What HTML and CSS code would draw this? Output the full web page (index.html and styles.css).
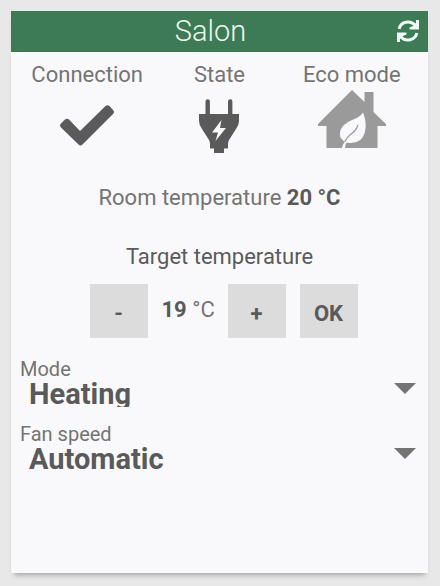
FILE: index.html
```html
<!DOCTYPE html>
<html lang="en">
<head>
<meta charset="utf-8">
<meta name="viewport" content="width=device-width, initial-scale=1">
<title>Salon</title>
<link rel="stylesheet" href="styles.css">
</head>
<body>
<main class="card">
  <header class="card-header">
    <h1 class="card-title">Salon</h1>
    <button class="refresh" type="button" aria-label="Refresh">
      <svg width="22" height="22" viewBox="0 0 22 22" fill="none" stroke="currentColor" stroke-width="3">
        <path d="M2.200 9A9 8.300 0 0 1 18 5M19.800 13A9 8.300 0 0 1 4 17"/>
        <path d="M22 0v9.500h-9.500V7.500L16 6l3-3V0zM0 22V12.500h9.500v2L6 16l-3 3v3z" fill="currentColor" stroke="none"/>
      </svg>
    </button>
  </header>

  <section class="statuses">
    <div class="status">
      <span>Connection</span>
      <svg class="status-icon" width="54" height="58" viewBox="0 0 54 58" fill="currentColor">
        <path d="M1 33.500 5 29.500Q7 28 9 29.500L20 41 45.500 16Q47.500 14.500 49.500 16L53 20Q55 22 53 24L22.500 54.500Q20.500 56.500 18.500 54.500L1 37.500Q-1 35.500 1 33.500Z"/>
      </svg>
    </div>
    <div class="status">
      <span>State</span>
      <svg class="status-icon" width="42" height="64" viewBox="0 0 42 64" fill="currentColor">
        <path fill-rule="evenodd" d="M7.500 24V11.500a2.200 2.200 0 0 1 4.400 0V24H30V11.500a2.200 2.200 0 0 1 4.400 0V24H41v7q0 4-3 8l-7 11q-1 2-1 4v4.500h-4v4.500H16v-4.500h-4V54q0-2-1-4L4 39q-3-4-3-8v-7ZM23.500 30 14 42.500h6L17.500 51 28 38h-6Z"/>
      </svg>
    </div>
    <div class="status">
      <span>Eco mode</span>
      <svg class="status-icon" width="68" height="58" viewBox="0 0 68 58">
        <path fill="#9a9a9a" d="M34 0 46.500 12V2H55.500V22L68 34V36H59.500V58H8.500V36H0V34Z"/>
        <path fill="#f9f9fb" d="M24 58Q25 54 26.500 52Q20 47 22.500 40Q25 34 34 30Q42 27 45 22.500Q49 32 47 42Q44 53 33 53Q30 53 28.500 52.500Q27 55 27 58Z"/>
        <path fill="none" stroke="#9a9a9a" stroke-width="1.200" d="M26.500 52Q29 47 33 44Q38 41 40 35"/>
      </svg>
    </div>
  </section>

  <p class="room">Room temperature <strong>20 °C</strong></p>

  <section class="target">
    <h2 class="target-title">Target temperature</h2>
    <div class="target-controls">
      <button class="key" type="button">-</button>
      <output class="target-value"><strong>19</strong> °C</output>
      <button class="key" type="button">+</button>
      <button class="key" type="button">OK</button>
    </div>
  </section>

  <section class="settings">
    <div class="field">
      <label for="mode">Mode</label>
      <div class="select-wrap">
        <select id="mode"><option>Heating</option></select>
      </div>
    </div>
    <div class="field">
      <label for="fan">Fan speed</label>
      <div class="select-wrap">
        <select id="fan"><option>Automatic</option></select>
      </div>
    </div>
  </section>
</main>
</body>
</html>
```
FILE: styles.css
```css
* {
  box-sizing: border-box;
}

body {
  margin: 0;
  min-height: 100vh;
  display: flex;
  padding: 11px 12px 13px 11px;
  background: #e8e8e9;
  color: #747474;
  font: 22px/28px Roboto, "Liberation Sans", sans-serif;
}

.card {
  flex: 1;
  background: #f9f9fb;
  box-shadow: 0 5px 5px -3px rgba(0, 0, 0, 0.3);
}

.card-header {
  display: grid;
  grid-template-columns: 1fr 40px;
  align-items: center;
  padding-left: 22px;
  background: #3d7a56;
  color: #eef8ee;
}

.card-title {
  margin: 0;
  font-size: 29px;
  font-weight: 300;
  line-height: 41px;
  text-align: center;
}

.refresh {
  display: flex;
  justify-content: center;
  padding: 0 0 2px;
  border: 0;
  background: none;
  color: inherit;
}

.statuses {
  display: grid;
  grid-template-columns: repeat(3, 1fr);
  padding: 9px 10px 0;
}

.status {
  display: flex;
  flex-direction: column;
  align-items: center;
  gap: 1px;
}

.status-icon {
  color: #5a5a5a;
}

strong {
  color: #5a5a5a;
  font-weight: 700;
}

.room {
  margin: 30px 0 0;
  text-align: center;
}

.target {
  margin-top: 31px;
  color: #5a5a5a;
}

.target-title {
  margin: 0;
  font: inherit;
  text-align: center;
}

.target-controls {
  display: flex;
  justify-content: center;
  gap: 14px;
  margin-top: 13px;
  padding-left: 8px;
}

.key {
  width: 58px;
  height: 54px;
  padding: 6px 0 0;
  border: 0;
  background: #dcdcdc;
  color: #5a5a5a;
  font: inherit;
  font-weight: 700;
}

.target-value {
  width: 52px;
  line-height: 52px;
  color: #747474;
  text-align: center;
  white-space: nowrap;
}

.settings {
  display: grid;
  gap: 19px;
  margin-top: 23px;
  padding: 0 9px;
}

.field label {
  display: block;
  font-size: 20px;
  line-height: 16px;
}

.select-wrap {
  position: relative;
}

.select-wrap::after {
  content: "";
  position: absolute;
  top: 6px;
  right: 3px;
  border: solid transparent;
  border-width: 11px 11px 0;
  border-top-color: #747474;
  pointer-events: none;
}

select {
  appearance: none;
  display: block;
  width: 100%;
  height: 30px;
  padding: 0 30px 0 9px;
  border: 0;
  border-radius: 0;
  background: transparent;
  color: #5a5a5a;
  font: 700 29px Roboto, "Liberation Sans", sans-serif;
}
```
